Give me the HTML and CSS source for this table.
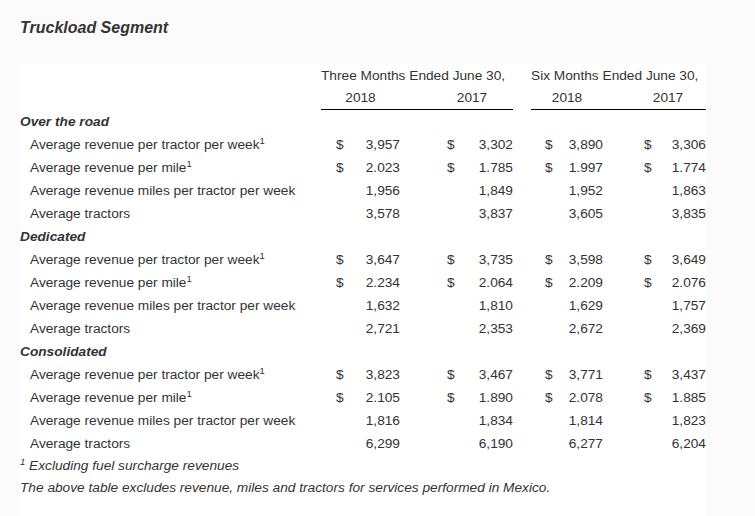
FILE: index.html
```html
<!DOCTYPE html>
<html lang="en">
<head>
<meta charset="utf-8">
<title>Truckload Segment</title>
<link rel="stylesheet" href="styles.css">
</head>
<body>
<h1 class="title">Truckload Segment</h1>
<div class="panel">
  <div class="head">
    <div class="group g1">
      <div class="gtitle">Three Months Ended June 30,</div>
      <div class="years y1"><span>2018</span><span></span><span>2017</span></div>
    </div>
    <div class="group g2">
      <div class="gtitle">Six Months Ended June 30,</div>
      <div class="years y2"><span>2018</span><span></span><span>2017</span></div>
    </div>
  </div>

  <div class="section">Over the road</div>
  <div class="row"><div class="label">Average revenue per tractor per week<sup>1</sup></div>
    <div class="c ca"><span>$</span><span>3,957</span></div><i></i>
    <div class="c cb"><span>$</span><span>3,302</span></div><i></i>
    <div class="c cc"><span>$</span><span>3,890</span></div><i></i>
    <div class="c cd"><span>$</span><span>3,306</span></div></div>
  <div class="row"><div class="label">Average revenue per mile<sup>1</sup></div>
    <div class="c ca"><span>$</span><span>2.023</span></div><i></i>
    <div class="c cb"><span>$</span><span>1.785</span></div><i></i>
    <div class="c cc"><span>$</span><span>1.997</span></div><i></i>
    <div class="c cd"><span>$</span><span>1.774</span></div></div>
  <div class="row"><div class="label">Average revenue miles per tractor per week</div>
    <div class="c ca"><span></span><span>1,956</span></div><i></i>
    <div class="c cb"><span></span><span>1,849</span></div><i></i>
    <div class="c cc"><span></span><span>1,952</span></div><i></i>
    <div class="c cd"><span></span><span>1,863</span></div></div>
  <div class="row"><div class="label">Average tractors</div>
    <div class="c ca"><span></span><span>3,578</span></div><i></i>
    <div class="c cb"><span></span><span>3,837</span></div><i></i>
    <div class="c cc"><span></span><span>3,605</span></div><i></i>
    <div class="c cd"><span></span><span>3,835</span></div></div>

  <div class="section">Dedicated</div>
  <div class="row"><div class="label">Average revenue per tractor per week<sup>1</sup></div>
    <div class="c ca"><span>$</span><span>3,647</span></div><i></i>
    <div class="c cb"><span>$</span><span>3,735</span></div><i></i>
    <div class="c cc"><span>$</span><span>3,598</span></div><i></i>
    <div class="c cd"><span>$</span><span>3,649</span></div></div>
  <div class="row"><div class="label">Average revenue per mile<sup>1</sup></div>
    <div class="c ca"><span>$</span><span>2.234</span></div><i></i>
    <div class="c cb"><span>$</span><span>2.064</span></div><i></i>
    <div class="c cc"><span>$</span><span>2.209</span></div><i></i>
    <div class="c cd"><span>$</span><span>2.076</span></div></div>
  <div class="row"><div class="label">Average revenue miles per tractor per week</div>
    <div class="c ca"><span></span><span>1,632</span></div><i></i>
    <div class="c cb"><span></span><span>1,810</span></div><i></i>
    <div class="c cc"><span></span><span>1,629</span></div><i></i>
    <div class="c cd"><span></span><span>1,757</span></div></div>
  <div class="row"><div class="label">Average tractors</div>
    <div class="c ca"><span></span><span>2,721</span></div><i></i>
    <div class="c cb"><span></span><span>2,353</span></div><i></i>
    <div class="c cc"><span></span><span>2,672</span></div><i></i>
    <div class="c cd"><span></span><span>2,369</span></div></div>

  <div class="section">Consolidated</div>
  <div class="row"><div class="label">Average revenue per tractor per week<sup>1</sup></div>
    <div class="c ca"><span>$</span><span>3,823</span></div><i></i>
    <div class="c cb"><span>$</span><span>3,467</span></div><i></i>
    <div class="c cc"><span>$</span><span>3,771</span></div><i></i>
    <div class="c cd"><span>$</span><span>3,437</span></div></div>
  <div class="row"><div class="label">Average revenue per mile<sup>1</sup></div>
    <div class="c ca"><span>$</span><span>2.105</span></div><i></i>
    <div class="c cb"><span>$</span><span>1.890</span></div><i></i>
    <div class="c cc"><span>$</span><span>2.078</span></div><i></i>
    <div class="c cd"><span>$</span><span>1.885</span></div></div>
  <div class="row"><div class="label">Average revenue miles per tractor per week</div>
    <div class="c ca"><span></span><span>1,816</span></div><i></i>
    <div class="c cb"><span></span><span>1,834</span></div><i></i>
    <div class="c cc"><span></span><span>1,814</span></div><i></i>
    <div class="c cd"><span></span><span>1,823</span></div></div>
  <div class="row"><div class="label">Average tractors</div>
    <div class="c ca"><span></span><span>6,299</span></div><i></i>
    <div class="c cb"><span></span><span>6,190</span></div><i></i>
    <div class="c cc"><span></span><span>6,277</span></div><i></i>
    <div class="c cd"><span></span><span>6,204</span></div></div>

  <p class="note note1"><sup>1</sup> Excluding fuel surcharge revenues</p>
  <p class="note note2">The above table excludes revenue, miles and tractors for services performed in Mexico.</p>
</div>
</body>
</html>
```
FILE: styles.css
```css
html, body {
  margin: 0;
  padding: 0;
}
body {
  background: #fbfbfb;
  color: #333;
  font-family: "Liberation Sans", Arial, sans-serif;
  font-size: 13.7px;
  overflow: hidden;
}
.title {
  margin: 0 0 26px 20px;
  padding-top: 18px;
  font-size: 16px;
  line-height: 20px;
  font-weight: bold;
  font-style: italic;
  color: #333;
}
.panel {
  margin-left: 20px;
  width: 686px;
  background: #fff;
  padding-bottom: 17px;
}
.head,
.row {
  display: grid;
  grid-template-columns: 301px 79px 31px 82px 18px 72px 27px 76px;
}
.head .g1 {
  grid-column: 2 / 5;
}
.head .g2 {
  grid-column: 6 / 9;
}
.gtitle {
  height: 23px;
  line-height: 23px;
  white-space: nowrap;
}
.years {
  display: grid;
  height: 22px;
  line-height: 22px;
  border-bottom: 1px solid #000;
  text-align: center;
}
.y1 {
  grid-template-columns: 79px 31px 82px;
}
.y2 {
  grid-template-columns: 72px 27px 76px;
}
.section {
  height: 23px;
  line-height: 23px;
  font-weight: bold;
  font-style: italic;
}
.row {
  height: 23px;
  line-height: 23px;
}
.label {
  padding-left: 10px;
  white-space: nowrap;
}
sup {
  font-size: 9.5px;
  line-height: 0;
  vertical-align: 5px;
}
.c {
  display: flex;
  justify-content: space-between;
}
.ca { padding-left: 15px; }
.cb { padding-left: 16px; }
.cc { padding-left: 14px; }
.cd { padding-left: 14px; }
.note {
  margin: 0;
  font-style: italic;
  white-space: nowrap;
}
.note1 {
  height: 21px;
  line-height: 21px;
}
.note2 {
  height: 23px;
  line-height: 23px;
}
```
